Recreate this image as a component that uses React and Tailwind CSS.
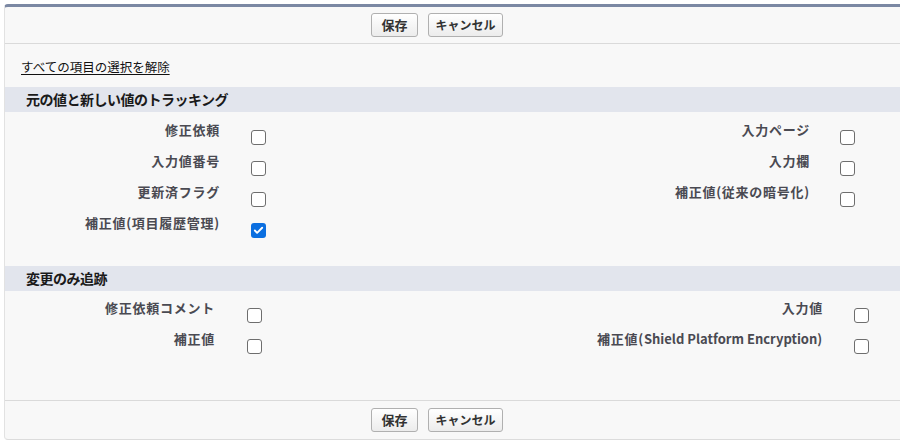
import { Check } from "lucide-react";

const jp = { fontFamily: '"Noto Sans CJK JP", "Noto Sans", sans-serif' };

function Box({ checked }) {
  return checked ? (
    <span className="flex h-[15px] w-[15px] shrink-0 items-center justify-center rounded-[3px] bg-[#0b6fe0]">
      <Check size={11} strokeWidth={4} className="text-white" />
    </span>
  ) : (
    <span className="block h-[15px] w-[15px] shrink-0 rounded-[3px] border-[1.5px] border-[#6e6e6e] bg-white" />
  );
}

function Buttons() {
  return (
    <div className="flex w-[864px] justify-center gap-[10px]">
      <button className="h-[24px] w-[47px] rounded-[3px] border border-[#b0b0b0] bg-gradient-to-b from-white to-[#ececec] text-[13px] font-bold text-[#333]">
        保存
      </button>
      <button className="h-[24px] w-[75px] rounded-[3px] border border-[#b0b0b0] bg-gradient-to-b from-white to-[#ececec] text-[12px] font-bold text-[#333]">
        キャンセル
      </button>
    </div>
  );
}

// one line: left label + box, right label + box
function Row({ left, right, widths }) {
  const [lw, lg, rw, rg] = widths;
  return (
    <div className="flex h-[31px] items-start">
      <div
        className="shrink-0 pt-[1px] text-right text-[13px] font-bold leading-[16px] tracking-[0.75px] text-[#4a4a52]"
        style={{ width: lw }}
      >
        {left ? left.label : ""}
      </div>
      <div className="mt-[9px] shrink-0" style={{ marginLeft: lg, width: 15 }}>
        {left && <Box checked={left.checked} />}
      </div>
      <div
        className="shrink-0 pt-[1px] text-right text-[13px] font-bold leading-[16px] tracking-[0.75px] text-[#4a4a52]"
        style={{ width: rw }}
      >
        {right ? right.label : ""}
      </div>
      <div className="mt-[9px] shrink-0" style={{ marginLeft: rg }}>
        {right && <Box checked={right.checked} />}
      </div>
    </div>
  );
}

const history = [
  [{ label: "修正依頼" }, { label: "入力ページ" }],
  [{ label: "入力値番号" }, { label: "入力欄" }],
  [{ label: "更新済フラグ" }, { label: "補正値(従来の暗号化)" }],
  [{ label: "補正値(項目履歴管理)", checked: true }, null],
];

const changes = [
  [{ label: "修正依頼コメント" }, { label: "入力値" }],
  [
    { label: "補正値" },
    {
      label: (
        <>
          補正値(<span className="tracking-[0px]">Shield Platform Encryption</span>)
        </>
      ),
    },
  ],
];

export default function App() {
  return (
    <div className="h-[448px] w-[900px] overflow-hidden bg-white pl-[4px] pt-[4px]" style={jp}>
      <div className="w-[910px] rounded-tl-[4px] rounded-bl-[4px] border-b border-l border-t-[3px] border-b-[#dcdcdc] border-l-[#e2e2e2] border-t-[#7b88a3] bg-[#f8f8f8]">
        {/* top buttons */}
        <div className="h-[37px] border-b border-[#dadada] pt-[6px]">
          <Buttons />
        </div>

        <div className="h-[43px] pl-[16px] pt-[9px]">
          <span className="cursor-pointer text-[12.5px] leading-[16px] text-[#111] underline underline-offset-2">
            すべての項目の選択を解除
          </span>
        </div>

        <div className="flex h-[25px] items-center bg-[#e2e5ed] pl-[21px] text-[14px] font-bold tracking-[-0.5px] text-[#1a1a1a]">
          元の値と新しい値のトラッキング
        </div>
        <div className="pb-[21px] pt-[9px]">
          {history.map((r, i) => (
            <Row key={i} left={r[0]} right={r[1]} widths={[215, 31, 544, 30]} />
          ))}
        </div>

        <div className="flex h-[25px] items-center bg-[#e2e5ed] pl-[21px] text-[14px] font-bold tracking-[-0.5px] text-[#1a1a1a]">
          変更のみ追跡
        </div>
        <div className="pb-[39px] pt-[8px]">
          {changes.map((r, i) => (
            <Row key={i} left={r[0]} right={r[1]} widths={[210, 32, 561, 31]} />
          ))}
        </div>

        {/* bottom buttons */}
        <div className="h-[39px] border-t border-[#dadada] pt-[7px]">
          <Buttons />
        </div>
      </div>
    </div>
  );
}
